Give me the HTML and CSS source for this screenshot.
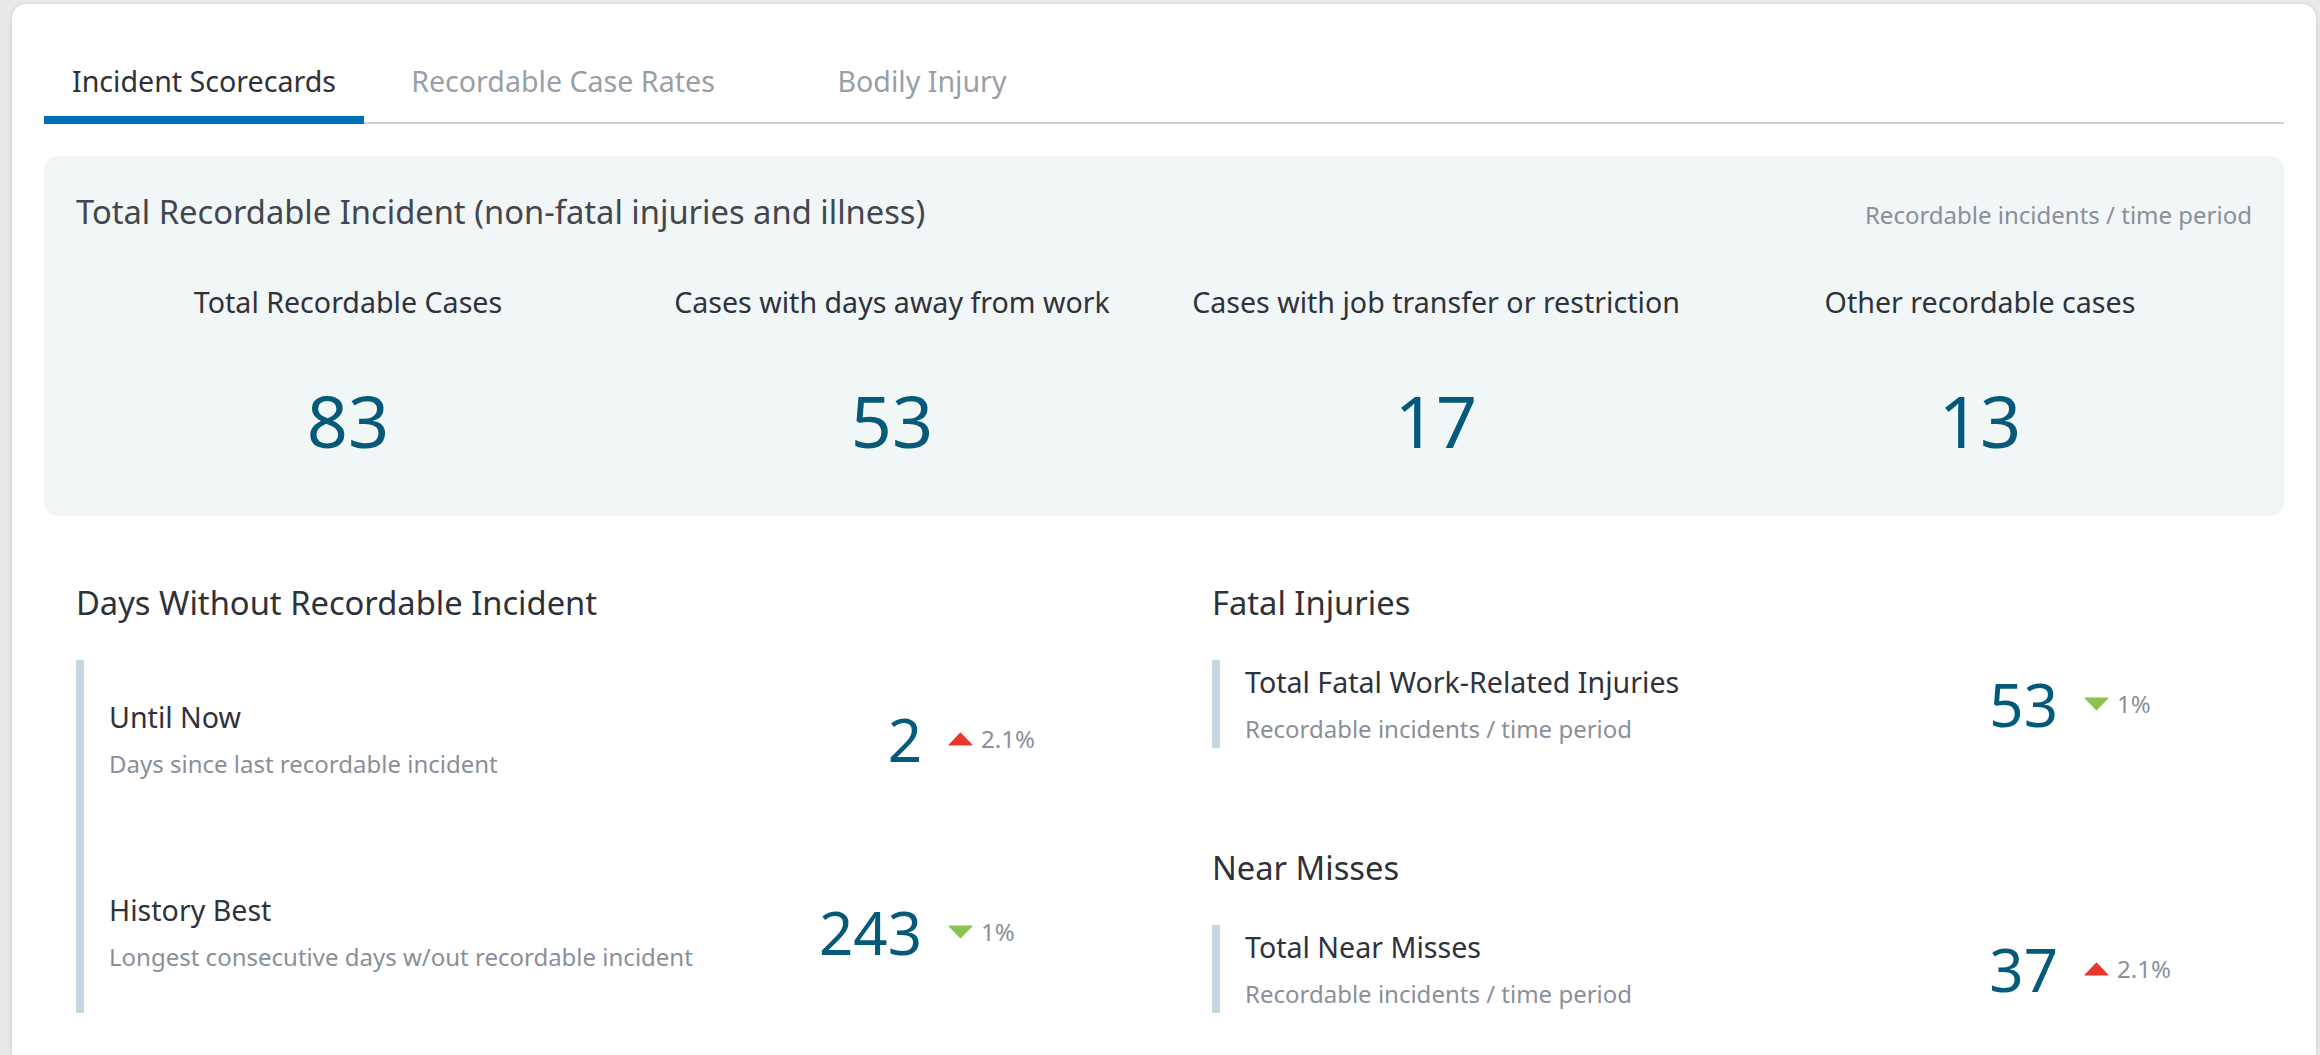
FILE: index.html
```html
<!DOCTYPE html>
<html lang="en">
<head>
  <meta charset="UTF-8" />
  <meta name="viewport" content="width=device-width, initial-scale=1.0"/>
  <title>Incident Scorecards</title>
  <link rel="stylesheet" href="styles.css">
</head>
<body>
  <div class="card">
    <nav class="tabs">
      <a class="tab active" href="#">Incident Scorecards</a>
      <a class="tab" href="#">Recordable Case Rates</a>
      <a class="tab" href="#">Bodily Injury</a>
    </nav>

    <section class="summary">
      <header class="summary-head">
        <h2>Total Recordable Incident (non-fatal injuries and illness)</h2>
        <span class="unit">Recordable incidents / time period</span>
      </header>
      <div class="summary-stats">
        <div class="stat">
          <div class="stat-label">Total Recordable Cases</div>
          <div class="stat-value">83</div>
        </div>
        <div class="stat">
          <div class="stat-label">Cases with days away from work</div>
          <div class="stat-value">53</div>
        </div>
        <div class="stat">
          <div class="stat-label">Cases with job transfer or restriction</div>
          <div class="stat-value">17</div>
        </div>
        <div class="stat">
          <div class="stat-label">Other recordable cases</div>
          <div class="stat-value">13</div>
        </div>
      </div>
    </section>

    <div class="details">
      <section class="group">
        <h3>Days Without Recordable Incident</h3>
        <div class="metric-list spread">
          <div class="metric">
            <div class="metric-text">
              <div class="metric-title">Until Now</div>
              <div class="metric-desc">Days since last recordable incident</div>
            </div>
            <div class="metric-num">2</div>
            <div class="metric-delta">
              <svg class="arrow up" width="25" height="14" viewBox="0 0 25 14"><path d="M12.5 1.2 L23.8 13 H1.2 Z"/></svg>
              <span>2.1%</span>
            </div>
          </div>
          <div class="metric">
            <div class="metric-text">
              <div class="metric-title">History Best</div>
              <div class="metric-desc">Longest consecutive days w/out recordable incident</div>
            </div>
            <div class="metric-num">243</div>
            <div class="metric-delta">
              <svg class="arrow down" width="25" height="14" viewBox="0 0 25 14"><path d="M1.2 1 H23.8 L12.5 12.8 Z"/></svg>
              <span>1%</span>
            </div>
          </div>
        </div>
      </section>

      <div class="group-stack">
        <section class="group">
          <h3>Fatal Injuries</h3>
          <div class="metric-list">
            <div class="metric">
              <div class="metric-text">
                <div class="metric-title">Total Fatal Work-Related Injuries</div>
                <div class="metric-desc">Recordable incidents / time period</div>
              </div>
              <div class="metric-num">53</div>
              <div class="metric-delta">
                <svg class="arrow down" width="25" height="14" viewBox="0 0 25 14"><path d="M1.2 1 H23.8 L12.5 12.8 Z"/></svg>
                <span>1%</span>
              </div>
            </div>
          </div>
        </section>

        <section class="group">
          <h3>Near Misses</h3>
          <div class="metric-list">
            <div class="metric">
              <div class="metric-text">
                <div class="metric-title">Total Near Misses</div>
                <div class="metric-desc">Recordable incidents / time period</div>
              </div>
              <div class="metric-num">37</div>
              <div class="metric-delta">
                <svg class="arrow up" width="25" height="14" viewBox="0 0 25 14"><path d="M12.5 1.2 L23.8 13 H1.2 Z"/></svg>
                <span>2.1%</span>
              </div>
            </div>
          </div>
        </section>
      </div>
    </div>
  </div>
</body>
</html>
```

FILE: styles.css
```css
* {
  box-sizing: border-box;
}

body, html {
  margin: 0;
  font-family: "Noto Sans", "Open Sans", Arial, sans-serif;
  background-color: #e8e9eb;
  color: #30323b;
}

body {
  padding: 4px 4px 0 12px;
}

h2, h3 {
  margin: 0;
  font-weight: normal;
}

.card {
  min-height: calc(100vh - 4px);
  padding: 40px 32px 40px;
  background-color: white;
  border-radius: 14px 14px 0 0;
  box-shadow: 0 1px 4px rgba(0, 0, 0, 0.18);
}

/* tabs */
.tabs {
  display: flex;
  gap: 39px;
  border-bottom: 2px solid #cfd2d6;
}

.tab {
  width: 320px;
  padding: 18px 0 16px;
  margin-bottom: -2px;
  border-bottom: 8px solid transparent;
  font-size: 28.6px;
  line-height: 38px;
  text-align: center;
  text-decoration: none;
  color: #9a9ea7;
}

.tab.active {
  color: #2f3139;
  border-bottom-color: #0070b3;
}

/* summary panel */
.summary {
  margin-top: 32px;
  padding: 34px 32px 47px;
  background-color: #f1f6f6;
  border-radius: 14px;
}

.summary-head {
  display: flex;
  justify-content: space-between;
  align-items: baseline;
}

.summary-head h2 {
  font-size: 32.7px;
  line-height: 44px;
  color: #43464f;
}

.unit {
  font-size: 24px;
  line-height: 32px;
  color: #8a8f99;
}

.summary-stats {
  display: grid;
  grid-template-columns: repeat(4, 1fr);
  margin-top: 49px;
}

.stat {
  text-align: center;
}

.stat-label {
  font-size: 28.6px;
  line-height: 38px;
  color: #30323b;
}

.stat-value {
  margin-top: 50px;
  font-size: 72px;
  line-height: 98px;
  color: #045a78;
}

/* detail groups */
.details {
  display: grid;
  grid-template-columns: 1fr 1fr;
  column-gap: 96px;
  margin-top: 65px;
  padding: 0 32px;
}

.group {
  display: flex;
  flex-direction: column;
}

.group h3 {
  margin-bottom: 35px;
  font-size: 32.7px;
  line-height: 44px;
  color: #2f3139;
}

.group-stack {
  display: flex;
  flex-direction: column;
  gap: 98px;
}

.metric-list {
  border-left: 8px solid #c3d9df;
}

.metric-list.spread {
  flex: 1;
  display: flex;
  flex-direction: column;
  justify-content: space-between;
  padding: 35px 0 37px;
}

.metric {
  display: flex;
  align-items: center;
  padding: 3px 0 3px 25px;
}

.metric-text {
  flex: 1;
}

.metric-title {
  font-size: 28.6px;
  line-height: 38px;
  color: #30323b;
}

.metric-desc {
  margin-top: 11px;
  font-size: 24px;
  line-height: 33px;
  color: #8a8f99;
}

.metric-num {
  width: 200px;
  font-size: 60px;
  line-height: 82px;
  text-align: right;
  color: #045a78;
}

.metric-delta {
  display: flex;
  align-items: center;
  gap: 8px;
  width: 168px;
  margin-left: 26px;
  font-size: 24px;
  line-height: 32px;
  color: #8a8f99;
}

.arrow path {
  stroke-width: 1.2;
  stroke-linejoin: round;
}

.arrow.up path {
  fill: #e8372b;
  stroke: #e8372b;
}

.arrow.down path {
  fill: #8bc34f;
  stroke: #8bc34f;
}
```
